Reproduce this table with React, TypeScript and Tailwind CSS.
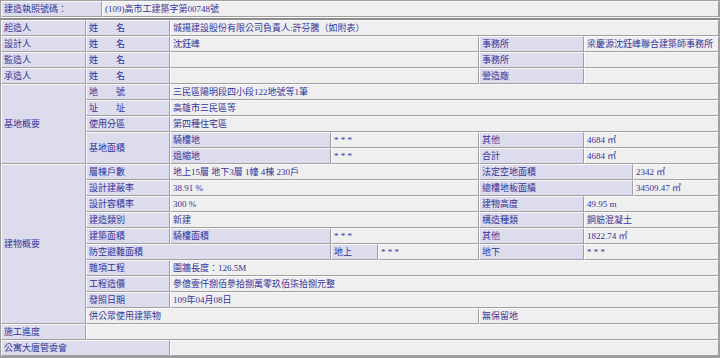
import React from "react";

const LBL = "bg-[#dcdcec]";
const VAL = "bg-[#efefef]";

function Cell({ className, children, lbl }: { className: string; children?: React.ReactNode; lbl?: boolean }) {
  return (
    <div
      className={`${lbl ? LBL : VAL} ${className} flex items-center overflow-hidden whitespace-pre border-t border-l border-t-[#fafafa] border-l-[#fafafa] border-r border-b border-r-[#a0a0a0] border-b-[#a0a0a0] pl-[2px] text-[9px] leading-[14px] text-[#333399]`}
    >
      {children}
    </div>
  );
}

const M = "\u33A1";

export default function App() {
  return (
    <div className="w-[720px] h-[358px] bg-[#efefef] font-['Liberation_Serif','Noto_Sans_CJK_TC',serif]">
      <div className="grid grid-cols-[101px_617px] grid-rows-[16px] border-t border-l border-r border-[#a0a0a0] border-b border-b-[#fafafa]">
        <Cell lbl className="col-start-1 row-start-1">建造執照號碼：</Cell>
        <Cell className="col-start-2 row-start-1">(109)高市工建築字第00748號</Cell>
      </div>
      <div className="grid grid-cols-[85px_84px_161px_47px_101px_105px_49px_86px] grid-rows-[repeat(21,16px)] border-t-2 border-t-[#8c8c8c] border-l border-l-[#a0a0a0] border-r border-r-[#a0a0a0] border-b-2 border-b-[#9c9c9c]">
        {/* 1 */}
        <Cell lbl className="col-start-1 row-start-1">起造人</Cell>
        <Cell lbl className="col-start-2 row-start-1">{"姓\u3000\u3000名"}</Cell>
        <Cell className="col-start-3 col-span-6 row-start-1">城揚建設股份有限公司負責人:許芬騰（如附表）</Cell>
        {/* 2 */}
        <Cell lbl className="col-start-1 row-start-2">設計人</Cell>
        <Cell lbl className="col-start-2 row-start-2">{"姓\u3000\u3000名"}</Cell>
        <Cell className="col-start-3 col-span-3 row-start-2">沈鈺峰</Cell>
        <Cell lbl className="col-start-6 row-start-2">事務所</Cell>
        <Cell className="col-start-7 col-span-2 row-start-2">梁慶源沈鈺峰聯合建築師事務所</Cell>
        {/* 3 */}
        <Cell lbl className="col-start-1 row-start-3">監造人</Cell>
        <Cell lbl className="col-start-2 row-start-3">{"姓\u3000\u3000名"}</Cell>
        <Cell className="col-start-3 col-span-3 row-start-3"></Cell>
        <Cell lbl className="col-start-6 row-start-3">事務所</Cell>
        <Cell className="col-start-7 col-span-2 row-start-3"></Cell>
        {/* 4 */}
        <Cell lbl className="col-start-1 row-start-4">承造人</Cell>
        <Cell lbl className="col-start-2 row-start-4">{"姓\u3000\u3000名"}</Cell>
        <Cell className="col-start-3 col-span-3 row-start-4"></Cell>
        <Cell lbl className="col-start-6 row-start-4">營造廠</Cell>
        <Cell className="col-start-7 col-span-2 row-start-4"></Cell>
        {/* 5-9 基地概要 */}
        <Cell lbl className="col-start-1 row-start-5 row-span-5">基地概要</Cell>
        <Cell lbl className="col-start-2 row-start-5">{"地\u3000\u3000號"}</Cell>
        <Cell className="col-start-3 col-span-6 row-start-5">三民區陽明段四小段122地號等1筆</Cell>
        <Cell lbl className="col-start-2 row-start-6">{"址\u3000\u3000址"}</Cell>
        <Cell className="col-start-3 col-span-6 row-start-6">高雄市三民區等</Cell>
        <Cell lbl className="col-start-2 row-start-7">使用分區</Cell>
        <Cell className="col-start-3 col-span-6 row-start-7">第四種住宅區</Cell>
        <Cell lbl className="col-start-2 row-start-8 row-span-2">基地面積</Cell>
        <Cell lbl className="col-start-3 row-start-8">騎樓地</Cell>
        <Cell className="col-start-4 col-span-2 row-start-8">{"* * *"}</Cell>
        <Cell lbl className="col-start-6 row-start-8">其他</Cell>
        <Cell className="col-start-7 col-span-2 row-start-8">{`4684 ${M}`}</Cell>
        <Cell lbl className="col-start-3 row-start-9">退縮地</Cell>
        <Cell className="col-start-4 col-span-2 row-start-9">{"* * *"}</Cell>
        <Cell lbl className="col-start-6 row-start-9">合計</Cell>
        <Cell className="col-start-7 col-span-2 row-start-9">{`4684 ${M}`}</Cell>
        {/* 10-19 建物概要 */}
        <Cell lbl className="col-start-1 row-start-10 row-span-10">建物概要</Cell>
        <Cell lbl className="col-start-2 row-start-10">層棟戶數</Cell>
        <Cell className="col-start-3 col-span-3 row-start-10">地上15層 地下3層 1幢 4棟 230戶</Cell>
        <Cell lbl className="col-start-6 col-span-2 row-start-10">法定空地面積</Cell>
        <Cell className="col-start-8 row-start-10">{`2342 ${M}`}</Cell>
        <Cell lbl className="col-start-2 row-start-11">設計建蔽率</Cell>
        <Cell className="col-start-3 col-span-3 row-start-11">38.91 %</Cell>
        <Cell lbl className="col-start-6 col-span-2 row-start-11">總樓地板面績</Cell>
        <Cell className="col-start-8 row-start-11">{`34509.47 ${M}`}</Cell>
        <Cell lbl className="col-start-2 row-start-12">設計容積率</Cell>
        <Cell className="col-start-3 col-span-3 row-start-12">300 %</Cell>
        <Cell lbl className="col-start-6 row-start-12">建物高度</Cell>
        <Cell className="col-start-7 col-span-2 row-start-12">49.95 m</Cell>
        <Cell lbl className="col-start-2 row-start-13">建造類別</Cell>
        <Cell className="col-start-3 col-span-3 row-start-13">新建</Cell>
        <Cell lbl className="col-start-6 row-start-13">構造種類</Cell>
        <Cell className="col-start-7 col-span-2 row-start-13">鋼筋混凝土</Cell>
        <Cell lbl className="col-start-2 row-start-14">建築面積</Cell>
        <Cell lbl className="col-start-3 row-start-14">騎樓面積</Cell>
        <Cell className="col-start-4 col-span-2 row-start-14">{"* * *"}</Cell>
        <Cell lbl className="col-start-6 row-start-14">其他</Cell>
        <Cell className="col-start-7 col-span-2 row-start-14">{`1822.74 ${M}`}</Cell>
        <Cell lbl className="col-start-2 col-span-2 row-start-15">防空避難面積</Cell>
        <Cell lbl className="col-start-4 row-start-15">地上</Cell>
        <Cell className="col-start-5 row-start-15">{"* * *"}</Cell>
        <Cell lbl className="col-start-6 row-start-15">地下</Cell>
        <Cell className="col-start-7 col-span-2 row-start-15">{"* * *"}</Cell>
        <Cell lbl className="col-start-2 row-start-16">雜項工程</Cell>
        <Cell className="col-start-3 col-span-6 row-start-16">圍牆長度：126.5M</Cell>
        <Cell lbl className="col-start-2 row-start-17">工程造價</Cell>
        <Cell className="col-start-3 col-span-6 row-start-17">參億壹仟捌佰參拾捌萬零玖佰柒拾捌元整</Cell>
        <Cell lbl className="col-start-2 row-start-18">發照日期</Cell>
        <Cell className="col-start-3 col-span-6 row-start-18">109年04月08日</Cell>
        <Cell className="col-start-2 col-span-4 row-start-19">供公眾使用建築物</Cell>
        <Cell className="col-start-6 col-span-3 row-start-19">無保留地</Cell>
        {/* 20 */}
        <Cell lbl className="col-start-1 row-start-20">施工進度</Cell>
        <Cell className="col-start-2 col-span-7 row-start-20"></Cell>
        {/* 21 */}
        <Cell lbl className="col-start-1 col-span-2 row-start-21">公寓大廈管委會</Cell>
        <Cell className="col-start-3 col-span-6 row-start-21"></Cell>
      </div>
    </div>
  );
}
